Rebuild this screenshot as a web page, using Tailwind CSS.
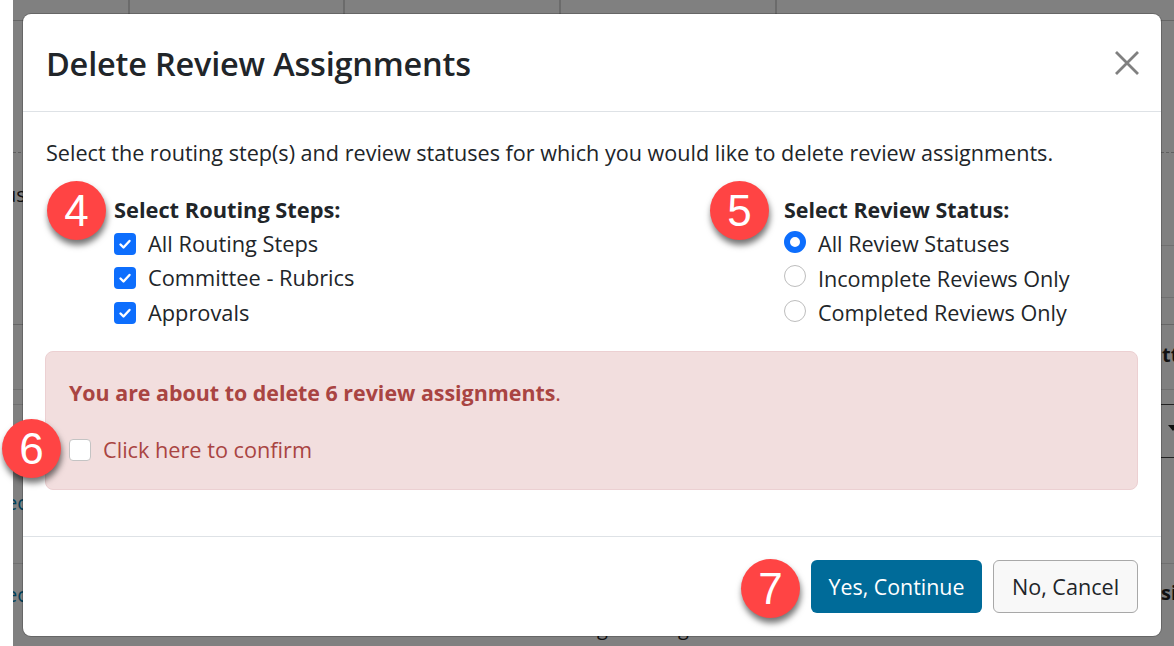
<!DOCTYPE html>
<html lang="en">
  <head>
    <meta charset="UTF-8" />
    <meta name="viewport" content="width=device-width, initial-scale=1.0" />
    <title>Delete Review Assignments</title>
    <script src="https://cdn.jsdelivr.net/npm/@tailwindcss/browser@4"></script>
  </head>
  <body class="relative h-[646px] w-[1174px] overflow-hidden bg-white font-['Open_Sans',sans-serif] text-[#212529]">
    <!-- Page behind the backdrop -->
    <div class="absolute inset-y-0 left-[13px] right-0 overflow-hidden bg-[#808080] text-[#111]">
      <div class="absolute top-0 left-[115px] h-[14px] w-[2px] bg-[#6b6b6b]"></div>
      <div class="absolute top-0 left-[330px] h-[14px] w-[2px] bg-[#6b6b6b]"></div>
      <div class="absolute top-0 left-[546px] h-[14px] w-[2px] bg-[#6b6b6b]"></div>
      <div class="absolute top-0 left-[762px] h-[14px] w-[2px] bg-[#6b6b6b]"></div>
      <div class="absolute top-[20px] inset-x-0 h-px bg-[#666]"></div>
      <div class="absolute top-[152px] inset-x-0 border-t border-dashed border-[#5f5f5f]"></div>
      <div class="absolute top-[245px] right-0 h-px w-[20px] bg-[#707070]"></div>
      <div class="absolute top-[297px] right-0 h-px w-[20px] bg-[#707070]"></div>
      <div class="absolute top-[324px] inset-x-0 h-px bg-[#666]"></div>
      <div class="absolute top-[389px] inset-x-0 h-px bg-[#707070]"></div>
      <div class="absolute top-[404px] left-0 h-px w-[20px] bg-[#707070]"></div>
      <div class="absolute top-[404px] right-0 h-px w-[20px] bg-[#222]"></div>
      <div class="absolute top-[457px] right-0 h-px w-[20px] bg-[#222]"></div>
      <div class="absolute top-[563px] inset-x-0 h-px bg-[#707070]"></div>
      <span class="absolute top-[180px] -left-[9px] text-[20px]">us</span>
      <span class="absolute top-[488px] -left-[7px] text-[20px] text-[#003f58]">ec</span>
      <span class="absolute top-[580px] -left-[7px] text-[20px] text-[#003f58]">ec</span>
      <span class="absolute top-[340px] left-[1149px] text-[20px] font-bold">tt</span>
      <span class="absolute top-[578px] left-[1148px] text-[20px] font-bold">si</span>
      <span class="absolute top-[613px] left-[584px] text-[20px]">g</span>
      <span class="absolute top-[613px] left-[665px] text-[20px]">g</span>
      <svg class="absolute top-[425px] left-[1155px] h-[6px] w-[10px]" viewBox="0 0 10 6" fill="#111"><path d="M0 0h10L5 6z" /></svg>
    </div>

    <!-- Modal -->
    <div class="absolute left-[23px] top-[14px] flex h-[622px] w-[1138px] flex-col rounded-[8px] bg-white shadow-[0_0_0_1px_rgba(0,0,0,0.2)]">
      <div class="flex h-[98px] items-center justify-between border-b border-[#dee2e6] pl-[23px] pr-[22px]">
        <h2 class="mt-[3px] text-[32.5px] font-semibold tracking-[-0.2px]">Delete Review Assignments</h2>
        <svg class="h-[24px] w-[24px] text-[#808080]" viewBox="0 0 24 24" fill="none" stroke="currentColor" stroke-width="2.8">
          <path d="M1 1l22 22M23 1L1 23" />
        </svg>
      </div>

      <div class="flex-1 pl-[22px] pr-[23px] pt-[26px]">
        <p class="ml-px text-[21.6px] leading-[30px]">Select the routing step(s) and review statuses for which you would like to delete review assignments.</p>
        <div class="mt-[25px] flex">
          <div class="ml-[69px] w-[670px]">
            <p class="text-[21.8px] font-bold leading-[34px]">Select Routing Steps:</p>
            <label class="flex h-[34.5px] items-center gap-[12px] text-[21.8px]">
              <span class="-mt-[1px] flex h-[22px] w-[22px] items-center justify-center rounded-[4px] bg-[#0d6efd]">
                <svg class="h-[14px] w-[14px]" viewBox="0 0 14 14" fill="none" stroke="#fff" stroke-width="2.4" stroke-linecap="round" stroke-linejoin="round"><path d="M2.5 7.5l3 3 6-6.5" /></svg>
              </span>
              All Routing Steps
            </label>
            <label class="flex h-[34.5px] items-center gap-[12px] text-[21.8px]">
              <span class="-mt-[1px] flex h-[22px] w-[22px] items-center justify-center rounded-[4px] bg-[#0d6efd]">
                <svg class="h-[14px] w-[14px]" viewBox="0 0 14 14" fill="none" stroke="#fff" stroke-width="2.4" stroke-linecap="round" stroke-linejoin="round"><path d="M2.5 7.5l3 3 6-6.5" /></svg>
              </span>
              Committee - Rubrics
            </label>
            <label class="flex h-[34.5px] items-center gap-[12px] text-[21.8px]">
              <span class="-mt-[1px] flex h-[22px] w-[22px] items-center justify-center rounded-[4px] bg-[#0d6efd]">
                <svg class="h-[14px] w-[14px]" viewBox="0 0 14 14" fill="none" stroke="#fff" stroke-width="2.4" stroke-linecap="round" stroke-linejoin="round"><path d="M2.5 7.5l3 3 6-6.5" /></svg>
              </span>
              Approvals
            </label>
          </div>
          <div>
            <p class="text-[21.4px] font-bold leading-[34px]">Select Review Status:</p>
            <label class="flex h-[34.5px] items-center gap-[12px] text-[21.6px]">
              <span class="-mt-[5px] h-[22px] w-[22px] rounded-full border-[6px] border-[#0d6efd] bg-white"></span>
              All Review Statuses
            </label>
            <label class="flex h-[34.5px] items-center gap-[12px] text-[21.6px]">
              <span class="-mt-[5px] h-[22px] w-[22px] rounded-full border border-[#bdbdbd] bg-white"></span>
              Incomplete Reviews Only
            </label>
            <label class="flex h-[34.5px] items-center gap-[12px] text-[21.6px]">
              <span class="-mt-[5px] h-[22px] w-[22px] rounded-full border border-[#bdbdbd] bg-white"></span>
              Completed Reviews Only
            </label>
          </div>
        </div>

        <div class="mt-[20.5px] h-[139px] rounded-[8px] border border-[#ecd0d2] bg-[#f2dede] px-[23px] pt-[25px] text-[#a94442]">
          <p class="text-[21.4px] leading-[32px]"><strong>You are about to delete 6 review assignments</strong>.</p>
          <label class="mt-[25px] flex items-center gap-[12px] text-[21.7px]">
            <span class="h-[22px] w-[22px] rounded-[4px] border border-[#c4c4c4] bg-white"></span>
            Click here to confirm
          </label>
        </div>
      </div>

      <div class="flex h-[100px] items-start justify-end gap-[11px] border-t border-[#dee2e6] pr-[23px] pt-[23px]">
        <button class="h-[53px] w-[171px] rounded-[6px] bg-[#006b99] pt-px text-[21.4px] text-white">Yes, Continue</button>
        <button class="h-[53px] w-[145px] rounded-[6px] border border-[#a8a8a8] bg-[#f8f8f8] pt-px text-[21.6px]">No, Cancel</button>
      </div>
    </div>

    <!-- Numbered callouts -->
    <div class="absolute left-[47px] top-[181px] flex h-[59px] w-[59px] items-center justify-center rounded-full bg-[#ff4444] font-['Liberation_Sans',sans-serif] text-[44px] text-white shadow-[1px_5px_6px_rgba(0,0,0,0.55)]">4</div>
    <div class="absolute left-[710px] top-[181px] flex h-[59px] w-[59px] items-center justify-center rounded-full bg-[#ff4444] font-['Liberation_Sans',sans-serif] text-[44px] text-white shadow-[1px_5px_6px_rgba(0,0,0,0.55)]">5</div>
    <div class="absolute left-[2px] top-[419px] flex h-[59px] w-[59px] items-center justify-center rounded-full bg-[#ff4444] font-['Liberation_Sans',sans-serif] text-[44px] text-white shadow-[1px_5px_6px_rgba(0,0,0,0.55)]">6</div>
    <div class="absolute left-[741px] top-[559px] flex h-[59px] w-[59px] items-center justify-center rounded-full bg-[#ff4444] font-['Liberation_Sans',sans-serif] text-[44px] text-white shadow-[1px_5px_6px_rgba(0,0,0,0.55)]">7</div>
  </body>
</html>
